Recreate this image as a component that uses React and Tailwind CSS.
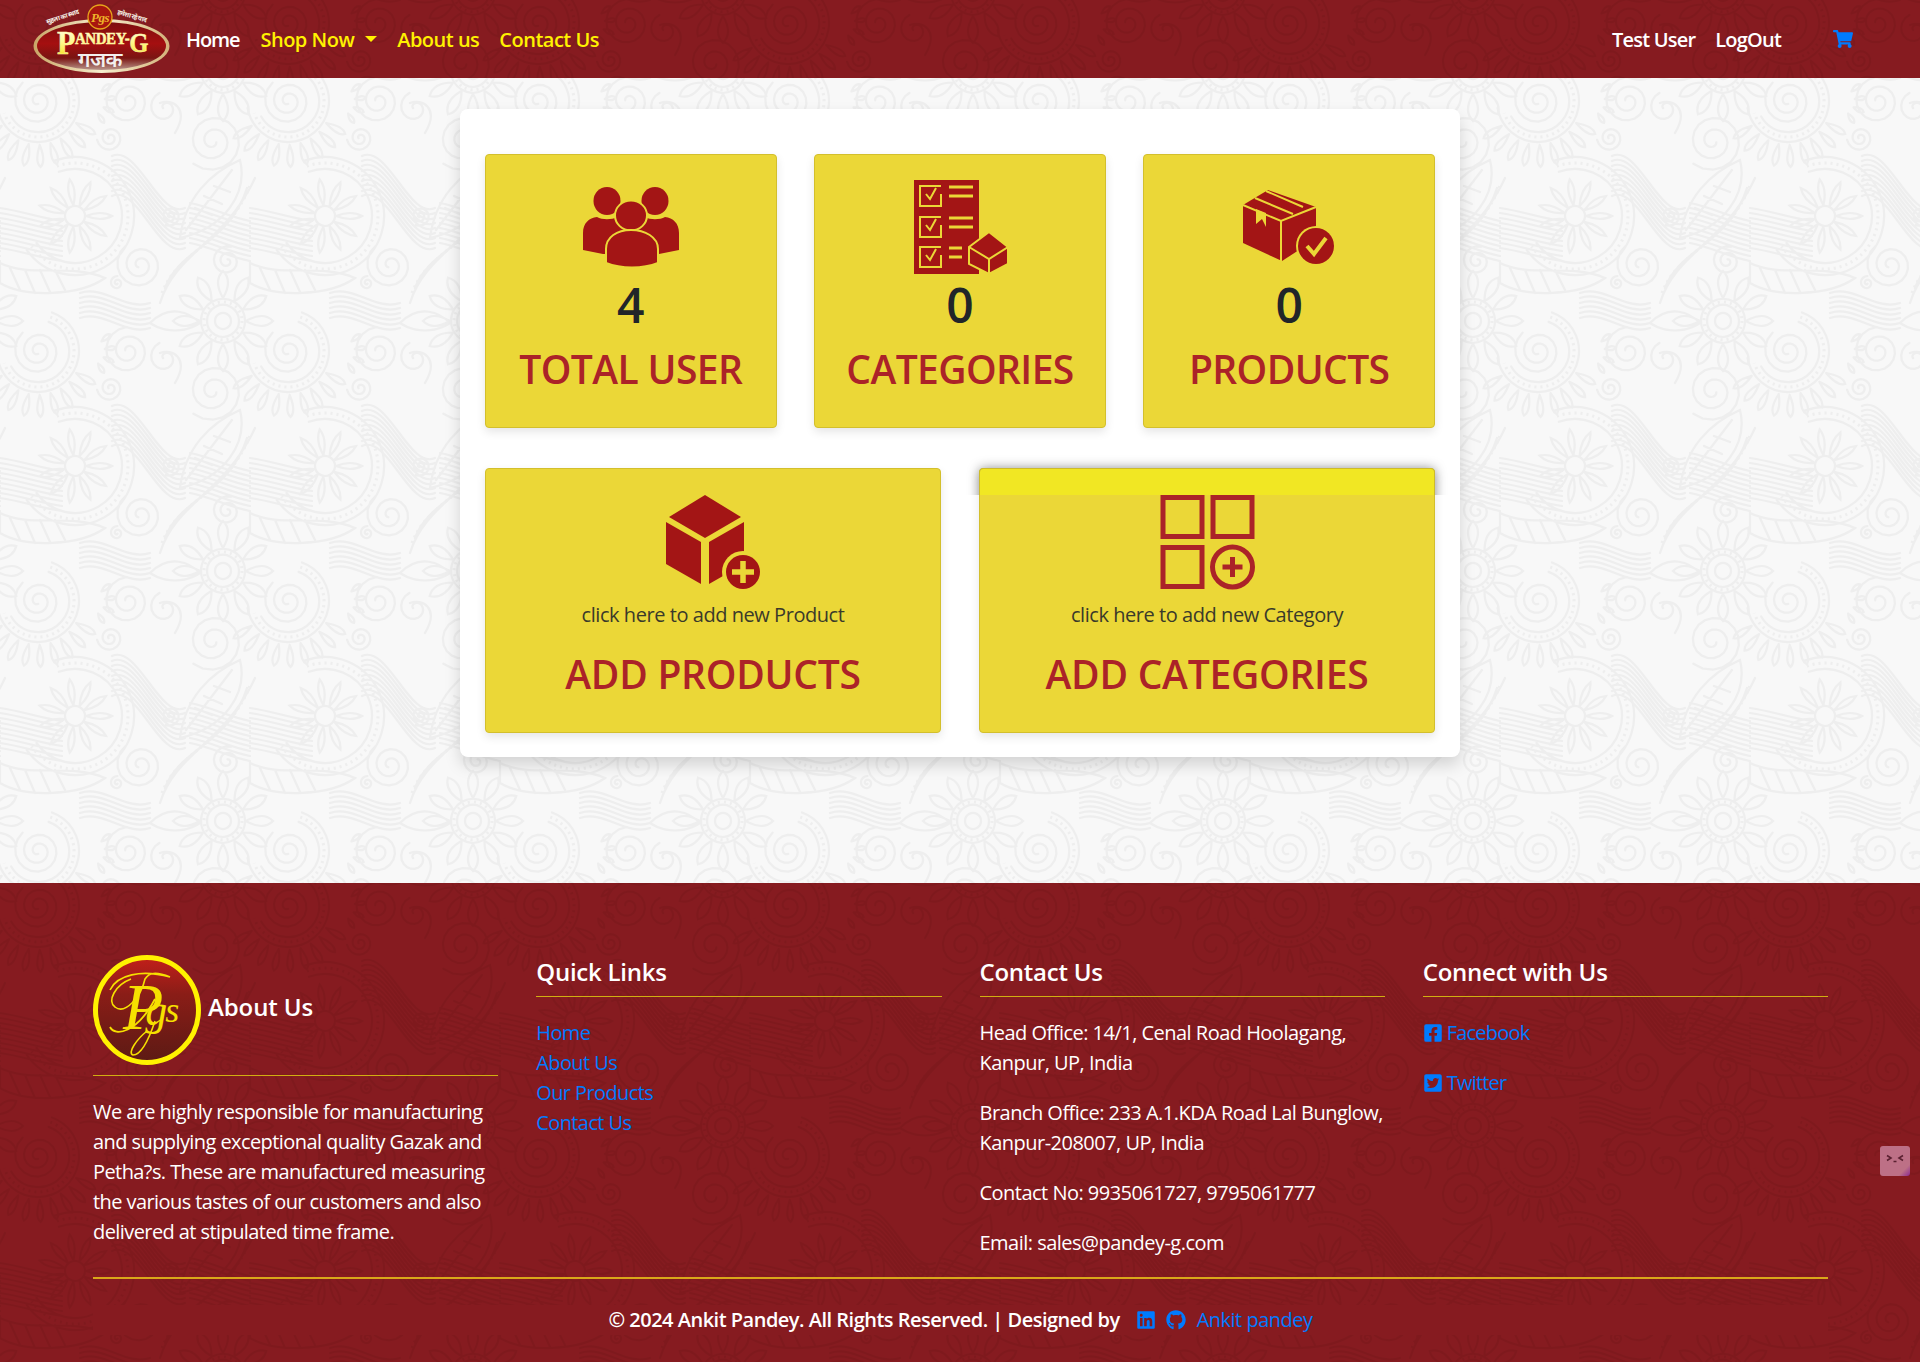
import React from "react";
import { FaShoppingCart, FaFacebookSquare, FaTwitterSquare, FaLinkedin, FaGithub } from "react-icons/fa";

function spiral(cx, cy, r, turns = 2.25, start = 0, dir = 1) {
  const n = Math.round(turns * 18);
  let d = "";
  for (let i = 0; i <= n; i++) {
    const t = i / n;
    const a = start + dir * t * turns * Math.PI * 2;
    const rr = r * (0.12 + 0.88 * t);
    d += `${i ? "L" : "M"}${(cx + Math.cos(a) * rr).toFixed(1)} ${(cy + Math.sin(a) * rr).toFixed(1)}`;
  }
  return d;
}
function arc(cx, cy, r, a0, a1) {
  const p = (a) => `${(cx + Math.cos((a * Math.PI) / 180) * r).toFixed(1)} ${(cy + Math.sin((a * Math.PI) / 180) * r).toFixed(1)}`;
  return `M${p(a0)}A${r} ${r} 0 ${Math.abs(a1 - a0) > 180 ? 1 : 0} 1 ${p(a1)}`;
}
function petals(cx, cy, r0, r1, n, w, a0 = 0, span = 360) {
  let d = "";
  for (let i = 0; i < n; i++) {
    const a = ((a0 + (span * i) / n) * Math.PI) / 180;
    const ca = Math.cos(a), sa = Math.sin(a);
    const x0 = cx + ca * r0, y0 = cy + sa * r0, x1 = cx + ca * r1, y1 = cy + sa * r1;
    const mx = cx + ca * (r0 + r1) * 0.55, my = cy + sa * (r0 + r1) * 0.55;
    d += `M${x0.toFixed(1)} ${y0.toFixed(1)}Q${(mx - sa * w).toFixed(1)} ${(my + ca * w).toFixed(1)} ${x1.toFixed(1)} ${y1.toFixed(1)}Q${(mx + sa * w).toFixed(1)} ${(my - ca * w).toFixed(1)} ${x0.toFixed(1)} ${y0.toFixed(1)}`;
  }
  return d;
}
function waves(x0, y0, x1, y1, count, gap, bend) {
  let d = "";
  for (let i = 0; i < count; i++) {
    const o = i * gap;
    d += `M${x0} ${y0 + o}C${x0 + (x1 - x0) * 0.35} ${y0 + o - bend} ${x0 + (x1 - x0) * 0.65} ${y1 + o + bend} ${x1} ${y1 + o}`;
  }
  return d;
}

const MAIN_PATHS = [
  spiral(38, 23, 24, 2.4, 1.5),
  arc(38, 23, 31, -70, 150),
  arc(38, 23, 41, -70, 170),
  spiral(128, 23, 24, 2.2, 3.4),
  spiral(213, 63, 30, 2.3, 0.4),
  spiral(110, 60, 13, 2, 3),
  spiral(170, 138, 10, 2, 2),
  spiral(140, 187, 24, 2.3, 2.2),
  spiral(117, 205, 7, 1.6, 1),
  spiral(227, 183, 15, 2, 5),
  spiral(165, 30, 16, 1.2, 3.1),
  arc(75, 138, 10, 0, 359),
  arc(75, 138, 47, -110, 145),
  arc(75, 138, 59, -110, 145),
  petals(75, 138, 11, 37, 11, 6),
  arc(223, 243, 8, 0, 359),
  arc(223, 243, 16, 0, 359),
  arc(223, 243, 22, 0, 359),
  petals(223, 243, 23, 50, 12, 10),
  petals(38, 23, 44, 66, 9, 6, 30, 130),
  petals(90, 23, 15, 26, 4, 4, -40, 130),
  waves(112, 78, 185, 130, 9, 5, 12),
  waves(0, 130, 62, 143, 9, 5, -3),
  waves(190, 125, 250, 143, 9, 5, -4),
  waves(80, 215, 150, 225, 6, 5, 8),
  "M180 160C185 120 210 95 240 82C248 115 225 150 180 160ZM186 152L232 92M195 130L212 137M204 118L222 126M214 108L230 114",
  "M165 210C180 170 230 165 247 110",
  "M160 225C175 175 225 165 255 100",
  "M0 185C30 200 70 185 105 200C80 218 25 220 0 205ZM10 190L20 212M25 192L35 215M40 192L50 214M55 192L65 212",
  "M150 245C170 225 190 235 200 245C185 255 165 255 150 245Z",
  "M175 55C190 30 172 20 160 25",
];
const DOT_PATHS = [
  arc(38, 23, 36, -70, 160),
  arc(75, 138, 53, -110, 145),
  "M162 215C178 172 228 166 251 105",
  arc(223, 243, 19, 0, 359),
];

function Pattern({ bg, line, id, width = 2.2 }) {
  const d = MAIN_PATHS.join("");
  const d2 = DOT_PATHS.join("");
  const shifts = [[0, 0], [-250, 0], [0, -250], [-250, -250], [250, 0], [0, 250]];
  return (
    <svg className="absolute inset-0 w-full h-full" aria-hidden="true">
      <defs>
        <pattern id={id} width="250" height="250" patternUnits="userSpaceOnUse">
          <rect width="250" height="250" fill={bg} />
          <g fill="none" stroke={line} strokeWidth={width} strokeLinecap="round">
            {shifts.map(([x, y], i) => (
              <g key={i} transform={`translate(${x} ${y})`}>
                <path d={d} />
                <path d={d2} strokeDasharray="2 4" strokeLinecap="butt" strokeWidth="3" />
              </g>
            ))}
          </g>
        </pattern>
      </defs>
      <rect width="100%" height="100%" fill={`url(#${id})`} />
    </svg>
  );
}

function Logo() {
  return (
    <svg viewBox="0 0 137 70" className="w-[137px] h-[70px] shrink-0">
      <defs>
        <linearGradient id="lg1" x1="0" y1="0" x2="0" y2="1">
          <stop offset="0" stopColor="#7d0f0f" />
          <stop offset="0.45" stopColor="#a50f10" />
          <stop offset="0.75" stopColor="#7a1512" />
          <stop offset="1" stopColor="#b9958a" />
        </linearGradient>
        <linearGradient id="lg2" x1="0" y1="0" x2="1" y2="0">
          <stop offset="0" stopColor="#c9a566" />
          <stop offset="0.5" stopColor="#f7efcf" />
          <stop offset="1" stopColor="#d3b27a" />
        </linearGradient>
        <linearGradient id="lg3" x1="0" y1="0" x2="0" y2="1">
          <stop offset="0" stopColor="#ffffff" />
          <stop offset="0.5" stopColor="#fffa8a" />
          <stop offset="1" stopColor="#f4d800" />
        </linearGradient>
      </defs>
      <ellipse cx="68.5" cy="42" rx="68" ry="27" fill="url(#lg2)" />
      <ellipse cx="68.5" cy="42" rx="64.5" ry="24" fill="url(#lg1)" />
      <circle cx="67" cy="13" r="12" fill="#a8160f" stroke="#e7a51b" strokeWidth="1.3" />
      <text x="67" y="18" textAnchor="middle" fontFamily="'Liberation Serif',serif" fontStyle="italic" fontSize="13" fill="#eeb32a">Pgs</text>
      <text x="14" y="20" fontFamily="'Noto Sans','Liberation Sans',sans-serif" fontSize="6.5" fontWeight="700" fill="#f5f0e6" transform="rotate(-18 14 20)">सुहला का स्वाद</text>
      <text x="84" y="10" fontFamily="'Noto Sans','Liberation Sans',sans-serif" fontSize="6.5" fontWeight="700" fill="#f5f0e6" transform="rotate(16 84 10)">हमेशा रहे याद</text>
      <text x="24" y="50" fontFamily="'Liberation Serif',serif" fontWeight="700" fill="url(#lg3)" stroke="#fffbb0" strokeWidth="0.5" textLength="91" lengthAdjust="spacingAndGlyphs">
        <tspan fontSize="34">P</tspan>
        <tspan fontSize="17" dy="-10">ANDEY-</tspan>
        <tspan fontSize="28" dy="8">G</tspan>
      </text>
      <text x="67" y="63" textAnchor="middle" fontFamily="'Noto Sans','Liberation Sans',sans-serif" fontSize="21" fill="#f2f0ee">गजक</text>
    </svg>
  );
}

function PgsSeal() {
  return (
    <svg viewBox="0 0 108 110" className="w-[108px] h-[110px] shrink-0">
      <defs>
        <linearGradient id="seal" x1="0" y1="0" x2="0" y2="1">
          <stop offset="0" stopColor="#c21f1a" />
          <stop offset="0.35" stopColor="#8a1d17" />
          <stop offset="1" stopColor="#5c1a14" />
        </linearGradient>
      </defs>
      <ellipse cx="54" cy="55" rx="51.5" ry="52.5" fill="url(#seal)" stroke="#fff200" strokeWidth="5" />
      <path d="M17 35C24 20 48 14 77 22C62 16 56 18 52 24C48 42 32 60 22 52C14 46 22 30 38 24" fill="none" stroke="#f6e000" strokeWidth="1.6" />
      <path d="M17 72C22 82 44 78 62 44" fill="none" stroke="#f6e000" strokeWidth="1.8" />
      <path d="M62 66C56 84 48 100 40 100C34 98 44 84 54 76" fill="none" stroke="#f6e000" strokeWidth="1.6" />
      <text x="30" y="74" fontFamily="'Liberation Serif',serif" fontStyle="italic" fill="#f6e000">
        <tspan fontSize="66">P</tspan>
        <tspan fontSize="44" dx="-18" dy="-4">g</tspan>
        <tspan fontSize="36" dx="-2" dy="-3">s</tspan>
      </text>
    </svg>
  );
}

const Y = "#ebd737";
const R = "#a31515";

function IconUsers() {
  return (
    <svg viewBox="0 0 96 96" className="w-24 h-24">
      <ellipse cx="24" cy="22" rx="13.5" ry="14" fill={R} />
      <ellipse cx="72" cy="22" rx="13.5" ry="14" fill={R} />
      <path d="M0 71V54C0 44 6 39 14 38C19 41 29 41 34 38H62C67 41 77 41 82 38C90 39 96 44 96 54V71L76 75H20Z" fill={R} />
      <ellipse cx="48" cy="36.5" rx="16" ry="15" fill={R} stroke={Y} strokeWidth="2" />
      <path d="M23 84V70C23 58 34 51 48 51C62 51 75 58 75 70V84C60 90 38 90 23 84Z" fill={R} stroke={Y} strokeWidth="2" />
    </svg>
  );
}
function IconCategories() {
  const rows = [6, 37, 67];
  return (
    <svg viewBox="0 0 96 96" className="w-24 h-24">
      <rect x="2" y="1" width="65" height="94" fill={R} />
      {rows.map((y, i) => (
        <g key={y} fill="none" stroke={Y}>
          <path d={`M29 ${y + 1}H8V${y + 21}H29V${y + 9}`} strokeWidth="2" />
          <path d={`M14 ${y + 9}L18 ${y + 14}L24 ${y + 3}`} strokeWidth="2" />
          <path d={`M37 ${y + 2}H${i === 2 ? 50 : 61}M37 ${y + 11}H${i === 2 ? 50 : 61}`} strokeWidth="3" />
        </g>
      ))}
      <path d="M77 53L96 68V85L77 95L57 85V68Z" fill={R} stroke={Y} strokeWidth="2" />
      <path d="M57 68L77 80L96 68M77 80V95" fill="none" stroke={Y} strokeWidth="2" />
    </svg>
  );
}
function IconProducts() {
  return (
    <svg viewBox="0 0 96 96" className="w-24 h-24">
      <path d="M2 26L27 11L75 28V60L41 82L2 64Z" fill={R} />
      <path d="M2 26L40 42L75 28M40 42V82M14 19L52 35M25 12L62 28" fill="none" stroke={Y} strokeWidth="2" />
      <path d="M15 30V45L21 40L25 48V34" fill={Y} />
      <circle cx="75" cy="67" r="20" fill={Y} />
      <circle cx="75" cy="67" r="18" fill={R} />
      <path d="M66 67L73 75L85 59" fill="none" stroke={Y} strokeWidth="4" />
    </svg>
  );
}
function IconAddProduct() {
  return (
    <svg viewBox="0 0 96 96" className="w-24 h-24">
      <path d="M40 1L76 23L40 44L4 23Z" fill={R} />
      <path d="M1 28L36 48V90L1 70Z" fill={R} />
      <path d="M44 48L79 28V70L44 90Z" fill={R} />
      <circle cx="78" cy="78" r="21" fill={Y} />
      <circle cx="78" cy="78" r="17" fill={R} />
      <path d="M78 67V89M67 78H89" stroke={Y} strokeWidth="5.5" />
    </svg>
  );
}
function IconAddCategory() {
  const C = "#ab2328";
  return (
    <svg viewBox="0 0 96 96" className="w-24 h-24" fill="none" stroke={C} strokeWidth="5">
      <rect x="4" y="3.5" width="39" height="39" />
      <rect x="54" y="3.5" width="39" height="39" />
      <rect x="4" y="53.5" width="39" height="39" />
      <circle cx="73.5" cy="73" r="20" />
      <path d="M73.5 63V83M63.5 73H83.5" strokeWidth="5" />
    </svg>
  );
}

const font = "font-['Open_Sans','Noto_Sans',sans-serif]";

function StatCard({ icon, value, label }) {
  return (
    <div className="flex flex-col items-center h-[274px] pt-[24px] bg-[#ebd737] border border-[#d3bf2c] rounded-[4px] shadow-[0_4px_10px_rgba(0,0,0,0.1)]">
      {icon}
      <div className="mt-[1px] text-[48px] leading-[58px] font-semibold text-[#212529]">{value}</div>
      <div className="mt-[11px] text-[39px] leading-[48px] font-semibold text-[#ab2328] tracking-[-0.6px] whitespace-nowrap">{label}</div>
    </div>
  );
}
function AddCard({ icon, text, label, strip }) {
  return (
    <div className="relative flex flex-col items-center h-[265px] pt-[25px] bg-[#ebd737] border border-[#d3bf2c] rounded-[4px] shadow-[0_4px_10px_rgba(0,0,0,0.1)]">
      {strip && (
        <div className="absolute left-[-20px] right-[-25px] top-[-20px] h-[46px] overflow-hidden">
          <div className="absolute left-[19px] right-[24px] top-[19px] h-[40px] bg-[#f1e723] border border-[#cdbb2a] rounded-[4px] shadow-[0_0_12px_rgba(0,0,0,0.4)]" />
        </div>
      )}
      <div className="relative">{icon}</div>
      <div className="mt-[10px] text-[20px] leading-[30px] text-[#3a3a2a] tracking-[-0.45px] whitespace-nowrap">{text}</div>
      <div className="mt-[20px] text-[39px] leading-[48px] font-semibold text-[#ab2328] tracking-[-0.25px] whitespace-nowrap">{label}</div>
    </div>
  );
}

function FooterHead({ children }) {
  return <h2 className="pt-[2px] pb-[10px] text-[24px] leading-[29px] font-semibold tracking-[-0.25px] text-white border-b border-[#d1ae12]">{children}</h2>;
}
function FLink({ children }) {
  return <a className="block text-[20px] leading-[30px] text-[#007bff] tracking-[-0.6px]">{children}</a>;
}

export default function App() {
  return (
    <div className={`${font} min-h-[1362px] flex flex-col`}>
      <header className="relative h-[78px] shrink-0 overflow-hidden">
        <Pattern id="p-nav" bg="#861b20" line="#7f191d" />
        <nav className="relative h-full flex items-center pl-[33px] pr-[67px] text-[20px] font-semibold tracking-[-0.5px] text-[#fff200]">
          <Logo />
          <a className="ml-[16px] mt-[2px] text-white tracking-[-1.1px]">Home</a>
          <a className="ml-[21px] mt-[2px]">Shop Now</a>
          <span className="ml-[11px] w-0 h-0 border-x-[6px] border-x-transparent border-t-[6px] border-t-[#fff200]" />
          <a className="ml-[20px] mt-[2px]">About us</a>
          <a className="ml-[20px] mt-[2px]">Contact Us</a>
          <div className="ml-auto flex items-center text-white tracking-[-0.8px]">
            <a className="mt-[2px]">Test User</a>
            <a className="ml-[20px] mt-[2px]">LogOut</a>
            <FaShoppingCart className="ml-[52px] text-[#007bff] text-[20px]" />
          </div>
        </nav>
      </header>

      <main className="relative h-[805px] shrink-0 pt-[31px]">
        <Pattern id="p-main" bg="#f8f8f8" line="#eeeeee" />
        <section className="relative w-[1000px] h-[648px] mx-auto px-[25px] pt-[45px] bg-white rounded-[8px] shadow-[0_8px_16px_rgba(0,0,0,0.15)]">
          <div className="grid grid-cols-3 gap-x-[37.5px]">
            <StatCard icon={<IconUsers />} value="4" label="TOTAL USER" />
            <StatCard icon={<IconCategories />} value="0" label="CATEGORIES" />
            <StatCard icon={<IconProducts />} value="0" label="PRODUCTS" />
          </div>
          <div className="mt-[40px] grid grid-cols-2 gap-x-[38px]">
            <AddCard icon={<IconAddProduct />} text="click here to add new Product" label="ADD PRODUCTS" />
            <AddCard strip icon={<IconAddCategory />} text="click here to add new Category" label="ADD CATEGORIES" />
          </div>
        </section>
      </main>

      <footer className="relative h-[479px] shrink-0 overflow-hidden text-white">
        <Pattern id="p-foot" bg="#861b20" line="#7f191d" />
        <div className="relative ml-[93px] mr-[92px] pt-[72px]">
          <div className="grid grid-cols-4 gap-x-[38px] h-[322px]">
            <div>
              <div className="flex items-center gap-[7px] h-[110px] box-content border-b border-[#d1ae12] pb-[10px]">
                <PgsSeal />
                <h2 className="mb-[7px] text-[24px] leading-[29px] font-semibold tracking-[-0.1px]">About Us</h2>
              </div>
              <p className="mt-[21px] text-[20px] leading-[30px] tracking-[-0.58px]">
                We are highly responsible for manufacturing and supplying exceptional quality Gazak and Petha?s. These are manufactured measuring the various tastes of our customers and also delivered at stipulated time frame.
              </p>
            </div>
            <div>
              <FooterHead>Quick Links</FooterHead>
              <div className="mt-[21px]">
                <FLink>Home</FLink>
                <FLink>About Us</FLink>
                <FLink>Our Products</FLink>
                <FLink>Contact Us</FLink>
              </div>
            </div>
            <div>
              <FooterHead>Contact Us</FooterHead>
              <div className="mt-[21px] flex flex-col gap-[20px] text-[20px] leading-[30px] tracking-[-0.52px]">
                <p>Head Office: 14/1, Cenal Road Hoolagang, Kanpur, UP, India</p>
                <p>Branch Office: 233 A.1.KDA Road Lal Bunglow, Kanpur-208007, UP, India</p>
                <p>Contact No: 9935061727, 9795061777</p>
                <p>Email: sales@pandey-g.com</p>
              </div>
            </div>
            <div>
              <FooterHead>Connect with Us</FooterHead>
              <div className="mt-[21px] flex flex-col gap-[20px]">
                <a className="flex items-center gap-[4px] text-[20px] leading-[30px] text-[#007bff] tracking-[-0.8px]"><FaFacebookSquare className="text-[20px]" />Facebook</a>
                <a className="flex items-center gap-[4px] text-[20px] leading-[30px] text-[#007bff] tracking-[-0.8px]"><FaTwitterSquare className="text-[20px]" />Twitter</a>
              </div>
            </div>
          </div>
          <div className="border-t-2 border-[#d9a71a] pt-[26px]">
            <div className="flex items-center justify-center h-[30px] bg-[#861b20] text-[20px] font-semibold tracking-[-0.5px] whitespace-nowrap">
              <span>© 2024 Ankit Pandey. All Rights Reserved. | Designed by</span>
              <FaLinkedin className="ml-[16px] text-[20px] text-[#007bff]" />
              <FaGithub className="ml-[10px] text-[20px] text-[#007bff]" />
              <a className="ml-[11px] text-[#007bff] font-medium">Ankit pandey</a>
            </div>
          </div>
        </div>
      </footer>

      <div className="fixed left-[1880px] top-[1146px] w-[30px] h-[30px] rounded-[3px] bg-[linear-gradient(135deg,#bd7086_0%,#bd7086_80%,#8a2a92_100%)] flex items-center justify-center">
        <svg viewBox="0 0 30 30" className="w-[30px] h-[30px]" fill="none" stroke="#5a2030" strokeWidth="1.6">
          <path d="M7 9.5L11 12L7 14.5M23 9.5L19 12L23 14.5M13.5 15.5H16.5" />
        </svg>
      </div>
    </div>
  );
}
